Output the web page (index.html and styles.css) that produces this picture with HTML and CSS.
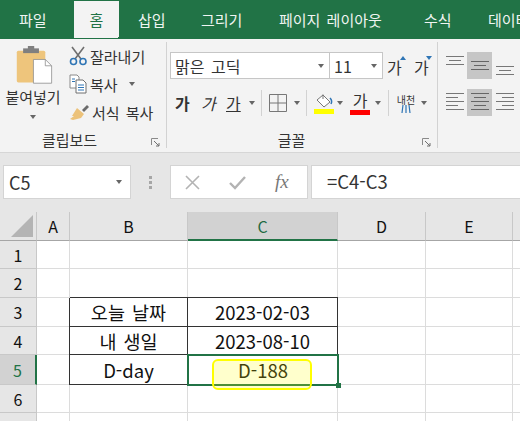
FILE: index.html
```html
<!DOCTYPE html>
<html lang="ko">
<head>
<meta charset="utf-8">
<title>Excel</title>
<link rel="stylesheet" href="styles.css">
</head>
<body>
<nav class="tabs">
  <span class="tab t1">파일</span>
  <span class="tab t2 active">홈</span>
  <span class="tab t3">삽입</span>
  <span class="tab t4">그리기</span>
  <span class="tab t5">페이지 레이아웃</span>
  <span class="tab t6">수식</span>
  <span class="tab t7">데이터</span>
</nav>
<section class="ribbon">
  <div class="group clip">
    <div class="clip-body">
      <div class="paste">
        <svg class="paste-icon" width="38" height="38" viewBox="0 0 48 48">
          <rect x="1" y="6" width="36" height="40" rx="2" fill="#eec57c"/>
          <rect x="9" y="3" width="20" height="6" fill="#7f7f7f"/>
          <rect x="15" y="0" width="8" height="5" fill="#7f7f7f"/>
          <path d="M22 17h15l8 8v22H22z" fill="#fff" stroke="#8c8c8c"/>
          <path d="M37 17v8h8" fill="none" stroke="#8c8c8c"/>
        </svg>
        <span class="paste-label">붙여넣기</span>
        <i class="caret paste-caret"></i>
      </div>
      <div class="clip-list">
        <div class="clip-row">
          <svg width="19" height="20" viewBox="0 0 19 20"><path d="M3 1l9 12M15 1L6 13" stroke="#6f6f6f" stroke-width="1.6" fill="none"/><circle cx="4.500" cy="15.500" r="3" fill="none" stroke="#2f75b5" stroke-width="1.600"/><circle cx="14" cy="15.500" r="3" fill="none" stroke="#2f75b5" stroke-width="1.600"/></svg>
          <span>잘라내기</span>
        </div>
        <div class="clip-row">
          <svg width="19" height="20" viewBox="0 0 19 20"><path d="M1 1h7l2 2v11H1z" fill="#fff" stroke="#8a8a8a"/><path d="M7 6h7l3 3v10H7z" fill="#fff" stroke="#6f6f6f"/><path d="M9 11h6M9 13.500h6M9 16h6M3 5h3M3 7.500h3" stroke="#2f75b5"/></svg>
          <span>복사</span>
          <i class="caret copy-caret"></i>
        </div>
        <div class="clip-row">
          <svg width="21" height="20" viewBox="0 0 21 20"><path d="M13 8l5-5 2 2-5 5z" fill="#6b6b6b"/><path d="M8 6l7 6-3 4-8 2-3-1 4-3-2 0z" fill="#ecc27a"/></svg>
          <span>서식 복사</span>
        </div>
      </div>
    </div>
    <div class="group-foot">
      <span class="group-label l-clip">클립보드</span>
      <svg class="launcher" width="9" height="9" viewBox="0 0 9 9"><path d="M.5 7V.5H7" fill="none" stroke="#8a8a8a"/><path d="M3 3l5 5M5 8h3V5" fill="none" stroke="#6f6f6f"/></svg>
    </div>
  </div>

  <div class="group font">
    <div class="font-body">
      <div class="font-row1">
        <div class="combo fname"><span>맑은 고딕</span><i class="caret"></i></div>
        <div class="combo fsize"><span>11</span><i class="caret"></i></div>
        <span class="grow">가<i class="tri up"></i></span>
        <span class="grow">가<i class="tri down"></i></span>
      </div>
      <div class="font-row2">
        <span class="fmt bold">가</span>
        <span class="fmt ital">가</span>
        <span class="fmt under">가</span>
        <i class="caret c-fmt"></i>
        <i class="sep"></i>
        <svg class="borders" width="18" height="18" viewBox="0 0 18 18"><path d="M.5.500h17v17H.500zM9 .5v17M.5 9h17" fill="none" stroke="#777"/></svg>
        <i class="caret c-b"></i>
        <i class="sep"></i>
        <span class="fill">
          <svg width="20" height="16" viewBox="0 0 20 16"><path d="M9 2l7 7-6 5-7-7z" fill="#fff" stroke="#777"/><path d="M9 6V1.500" stroke="#777"/><path d="M16 5c2 2 2 4 1 6" fill="none" stroke="#2f75b5" stroke-width="1.500"/></svg>
          <i class="swatch yellow"></i>
        </span>
        <i class="caret c-f"></i>
        <span class="color">가<i class="swatch red"></i></span>
        <i class="caret c-c"></i>
        <i class="sep s3"></i>
        <span class="phon"><span>내천</span><svg width="10" height="8" viewBox="0 0 10 8"><path d="M2 0L1 8M5 0v8M8 0l1 8" stroke="#2f75b5" fill="none" stroke-width="1.200"/></svg></span>
        <i class="caret c-p"></i>
      </div>
    </div>
    <div class="group-foot">
      <span class="group-label l-font">글꼴</span>
      <svg class="launcher" width="9" height="9" viewBox="0 0 9 9"><path d="M.5 7V.5H7" fill="none" stroke="#8a8a8a"/><path d="M3 3l5 5M5 8h3V5" fill="none" stroke="#6f6f6f"/></svg>
    </div>
  </div>

  <div class="group align">
    <div class="al-grid">
      <span class="al"><svg width="18" height="27" viewBox="0 0 18 27"><path d="M0 4.500h18M3 8.500h12M0 12.500h18" stroke="#777" fill="none"/></svg></span>
      <span class="al on"><svg width="18" height="27" viewBox="0 0 18 27"><path d="M0 9.500h18M3 13.500h12M0 17.500h18" stroke="#666" fill="none"/></svg></span>
      <span class="al"><svg width="18" height="27" viewBox="0 0 18 27"><path d="M0 14.500h18M3 18.500h12M0 22.500h18" stroke="#777" fill="none"/></svg></span>
      <span class="al"><svg width="18" height="27" viewBox="0 0 18 27"><path d="M0 4.500h18M0 8.500h12M0 12.500h18M0 16.500h12M0 20.500h18" stroke="#777" fill="none"/></svg></span>
      <span class="al on"><svg width="18" height="27" viewBox="0 0 18 27"><path d="M0 4.500h18M3 8.500h12M0 12.500h18M3 16.500h12M0 20.500h18" stroke="#666" fill="none"/></svg></span>
      <span class="al"><svg width="18" height="27" viewBox="0 0 18 27"><path d="M0 4.500h18M6 8.500h12M0 12.500h18M6 16.500h12M0 20.500h18" stroke="#777" fill="none"/></svg></span>
    </div>
  </div>
</section>

<section class="fbar">
  <div class="namebox"><span>C5</span><i class="caret"></i></div>
  <div class="fdots"><i></i><i></i><i></i></div>
  <div class="fbtns">
    <svg width="15" height="15" viewBox="0 0 15 15"><path d="M1 1l13 13M14 1L1 14" stroke="#b3b3b3" stroke-width="1.600"/></svg>
    <svg width="17" height="15" viewBox="0 0 17 15"><path d="M1 8l5 5L16 2" stroke="#b3b3b3" stroke-width="2.400" fill="none"/></svg>
    <span class="fx">fx</span>
  </div>
  <div class="finput">=C4-C3</div>
</section>

<section class="sheet">
  <div class="hd corner"><svg width="22" height="22" viewBox="0 0 22 22"><path d="M22 0v22H0z" fill="#b4b4b4"/></svg></div>
  <div class="hd col">A</div><div class="hd col">B</div><div class="hd col sel">C</div><div class="hd col">D</div><div class="hd col">E</div><div class="hd col last"></div>

  <div class="hd rw">1</div><div class="c"></div><div class="c"></div><div class="c"></div><div class="c"></div><div class="c"></div><div class="c last"></div>
  <div class="hd rw">2</div><div class="c"></div><div class="c"></div><div class="c"></div><div class="c"></div><div class="c"></div><div class="c last"></div>
  <div class="hd rw">3</div><div class="c"></div><div class="c tb lb">오늘 날짜</div><div class="c tb">2023-02-03</div><div class="c"></div><div class="c"></div><div class="c last"></div>
  <div class="hd rw">4</div><div class="c"></div><div class="c tb lb">내 생일</div><div class="c tb">2023-08-10</div><div class="c"></div><div class="c"></div><div class="c last"></div>
  <div class="hd rw rsel">5</div><div class="c"></div><div class="c tb lb">D-day</div><div class="c tb active">D-188</div><div class="c"></div><div class="c"></div><div class="c last"></div>
  <div class="hd rw">6</div><div class="c"></div><div class="c"></div><div class="c"></div><div class="c"></div><div class="c"></div><div class="c last"></div>
  <div class="hd rw"></div><div class="c"></div><div class="c"></div><div class="c"></div><div class="c"></div><div class="c"></div><div class="c last"></div>
  <div class="mark"></div>
</section>
</body>
</html>
```
FILE: styles.css
```css
* { box-sizing: border-box; }
html, body { margin: 0; padding: 0; }
body {
  width: 520px;
  height: 421px;
  overflow: hidden;
  background: #e6e6e6;
  color: #333;
  font-family: "Noto Sans CJK KR", "Noto Sans", sans-serif;
  font-size: 15px;
  word-spacing: 2px;
}
i { display: block; font-style: normal; }

/* tabs */
.tabs {
  display: flex;
  height: 39px;
  background: #217346;
  overflow: hidden;
}
.tab { color: #f0f5f2; font-size: 15px; line-height: 39px; white-space: nowrap; flex: none; }
.tab.active { background: #f3f3f3; color: #217346; text-align: center; }
.t1 { margin-left: 19px; width: 54px; }
.t2 { width: 47px; }
.t3 { margin-left: 18px; width: 63px; }
.t4 { width: 78px; }
.t5 { width: 145px; }
.t6 { width: 64px; }
.t7 { width: 32px; }

/* ribbon */
.ribbon {
  display: flex;
  height: 114px;
  background: #f3f3f3;
  border-bottom: 1px solid #d6d6d6;
  padding-top: 3px;
}
.group { display: flex; flex-direction: column; height: 106px; flex: none; border-right: 1px solid #d2d2d2; }
.clip { width: 167px; }
.font { width: 271px; }
.align { flex: 1; border-right: 0; }
.clip-body { display: flex; height: 87px; }
.paste { width: 66px; display: flex; flex-direction: column; align-items: center; padding-top: 4px; }
.paste-icon { margin-left: 4px; flex: none; }
.paste-label { font-size: 15px; line-height: 20px; margin-top: 3px; white-space: nowrap; }
.paste-caret { margin-top: 8px; }
.clip-list { display: flex; flex-direction: column; padding-left: 3px; }
.clip-row { display: flex; align-items: center; height: 28px; gap: 2px; font-size: 15px; white-space: nowrap; }
.clip-row svg { flex: none; }
.copy-caret { margin-left: 9px; }
.caret { width: 0; height: 0; border-left: 3.5px solid transparent; border-right: 3.5px solid transparent; border-top: 4px solid #666; flex: none; }
.group-foot { flex: 1; display: flex; align-items: center; padding-top: 3px; }
.group-label { flex: 1; text-align: center; font-size: 15px; line-height: 16px; }
.l-clip { padding-right: 12px; }
.l-font { padding-right: 6px; }
.launcher { margin-right: 6px; margin-top: 5px; flex: none; }

/* font group */
.font-body { height: 87px; padding: 10px 0 0 3px; }
.font-row1 { display: flex; height: 27px; align-items: stretch; }
.combo { background: #fff; border: 1px solid #c6c6c6; display: flex; align-items: center; justify-content: space-between; padding: 0 5px 0 4px; font-size: 16px; }
.fname { width: 160px; }
.fsize { width: 53px; border-left: 0; }
.grow { position: relative; width: 22px; margin-left: 4px; font-size: 16px; line-height: 30px; }
.grow + .grow { margin-left: 5px; }
.tri { position: absolute; right: 3px; top: 4px; border-left: 3.5px solid transparent; border-right: 3.5px solid transparent; }
.tri.up { border-bottom: 4px solid #2f75b5; }
.tri.down { border-top: 4px solid #2f75b5; right: 4px; }
.font-row2 { display: flex; align-items: center; height: 30px; margin-top: 9px; padding-left: 5px; }
.fmt { width: 26px; font-size: 16px; line-height: 24px; flex: none; }
.bold { font-weight: 700; }
.ital { font-style: italic; width: 25px; }
.under { text-decoration: underline; width: 16px; }
.c-fmt { margin-left: 7px; }
.sep { width: 1px; height: 26px; background: #d2d2d2; margin: 0 7px 0 6px; flex: none; }
.s3 { margin-left: 7px; }
.borders { flex: none; }
.c-b { margin-left: 7px; }
.fill { display: flex; flex-direction: column; width: 20px; align-items: center; flex: none; }
.swatch { width: 20px; height: 5px; flex: none; }
.yellow { background: #ffff00; }
.red { background: #ff0000; }
.c-f { margin-left: 3px; margin-right: 7px; }
.color { display: flex; flex-direction: column; align-items: center; width: 20px; font-size: 16px; line-height: 19px; flex: none; }
.c-c { margin-left: 5px; }
.phon { display: flex; flex-direction: column; align-items: center; width: 20px; font-size: 10px; line-height: 11px; flex: none; }
.c-p { margin-left: 5px; }

/* alignment */
.al-grid { display: grid; grid-template-columns: repeat(3, 25px); gap: 10px 0; padding: 10px 0 0 4px; }
.al { height: 27px; display: flex; justify-content: center; }
.al.on { background: #c6c6c6; }

/* formula bar */
.fbar { display: flex; height: 34px; margin-top: 12px; padding-left: 3px; background: #e6e6e6; }
.namebox { width: 128px; background: #fff; border: 1px solid #d4d4d4; display: flex; align-items: center; justify-content: space-between; padding: 0 8px 0 5px; font-size: 18px; }
.fdots { width: 39px; display: flex; flex-direction: column; align-items: center; justify-content: center; gap: 2px; }
.fdots i { width: 3px; height: 3px; background: #a6a6a6; }
.fbtns { width: 138px; background: #fff; border: 1px solid #d4d4d4; display: flex; align-items: center; gap: 29px; padding-left: 14px; }
.fx { font-family: "Liberation Serif", serif; font-style: italic; font-size: 19px; color: #777; margin-left: 0; }
.finput { flex: 1; margin-left: 3px; background: #fff; border: 1px solid #d4d4d4; border-right: 0; padding-left: 15px; font-size: 18.5px; line-height: 31px; }

/* sheet */
.sheet {
  position: relative;
  display: grid;
  grid-template-columns: 37px 33px 118px 150px 88px 87px 7px;
  grid-template-rows: 29px 28px 29px 29px 28px 30px 28px 29px;
  margin-top: 13px;
  background: #fff;
  color: #111;
}
.hd { background: #e6e6e6; display: flex; align-items: center; justify-content: center; font-size: 16px; border-right: 1px solid #c8c8c8; }
.corner { align-items: flex-end; justify-content: flex-end; padding: 0 3px 3px 0; border-bottom: 1px solid #a6a6a6; }
.col { border-bottom: 1px solid #a6a6a6; }
.col.sel { background: #d2d2d2; color: #1f6b42; border-bottom: 2px solid #217346; }
.rw { border-bottom: 1px solid #c8c8c8; }
.rsel { background: #d2d2d2; color: #217346; border-right: 2px solid #217346; }
.c { display: flex; align-items: center; justify-content: center; font-size: 18.5px; border-right: 1px solid #dcdcdc; border-bottom: 1px solid #dcdcdc; white-space: nowrap; }
.last { border-right: 0; }
.tb { border-right-color: #333; border-bottom-color: #333; box-shadow: 0 -1px 0 #333; }
.lb { box-shadow: 0 -1px 0 #333, -1px 0 0 #333; }
.active { position: relative; box-shadow: none; border: 0; z-index: 1; }
.active::before { content: ""; position: absolute; inset: -1px; border: 2px solid #217346; }
.active::after { content: ""; position: absolute; right: -3px; bottom: -3px; width: 5px; height: 5px; background: #217346; }
.mark {
  position: absolute;
  left: 212px;
  top: 147px;
  width: 100px;
  height: 31px;
  border: 2px solid #ffff00;
  border-radius: 6px;
  background: rgba(255, 255, 0, .2);
  z-index: 2;
}
```
